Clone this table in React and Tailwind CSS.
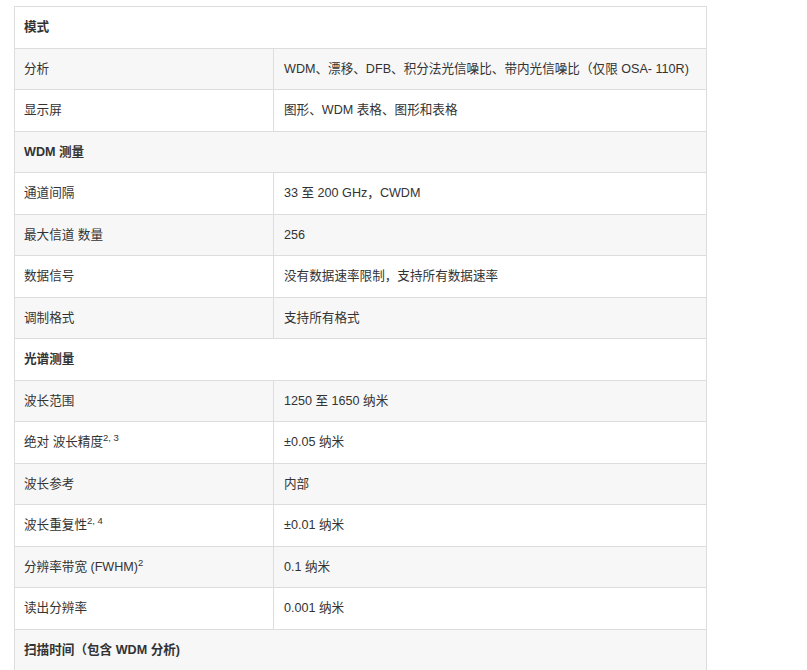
const rows = [
  { head: "模式" },
  { label: "分析", value: "WDM、漂移、DFB、积分法光信噪比、带内光信噪比（仅限 OSA- 110R)" },
  { label: "显示屏", value: "图形、WDM 表格、图形和表格" },
  { head: "WDM 测量" },
  { label: "通道间隔", value: "33 至 200 GHz，CWDM" },
  { label: "最大信道 数量", value: "256" },
  { label: "数据信号", value: "没有数据速率限制，支持所有数据速率" },
  { label: "调制格式", value: "支持所有格式" },
  { head: "光谱测量" },
  { label: "波长范围", value: "1250 至 1650 纳米" },
  { label: "绝对 波长精度", sup: "2, 3", value: "±0.05 纳米" },
  { label: "波长参考", value: "内部" },
  { label: "波长重复性", sup: "2, 4", value: "±0.01 纳米" },
  { label: "分辨率带宽 (FWHM)", sup: "2", value: "0.1 纳米" },
  { label: "读出分辨率", value: "0.001 纳米" },
  { head: "扫描时间（包含 WDM 分析)" },
];

export default function App() {
  return (
    <div
      className="min-h-[670px] bg-white pl-[14px] pt-[6px] text-[12.6px] text-[#333]"
      style={{ fontFamily: '"Liberation Sans", Arial, "Noto Sans CJK SC", sans-serif' }}
    >
      <table className="w-[693px] table-fixed border-collapse">
        <colgroup>
          <col className="w-[259px]" />
          <col />
        </colgroup>
        <tbody>
          {rows.map((row, i) => (
            <tr key={i} className={i % 2 === 1 ? "bg-[#f7f7f7]" : "bg-white"}>
              {row.head ? (
                <td colSpan={2} className="border border-[#dddddd] px-[9px] py-[10px] font-bold leading-[20.5px]">
                  {row.head}
                </td>
              ) : (
                <>
                  <td className="border border-[#dddddd] px-[9px] py-[10px] leading-[20.5px]">
                    {row.label}
                    {row.sup ? (
                      <span className="relative -top-[5px] text-[9.5px] leading-none">{row.sup}</span>
                    ) : null}
                  </td>
                  <td className="whitespace-nowrap border border-[#dddddd] px-[10px] py-[10px] leading-[20.5px]">
                    {row.value}
                  </td>
                </>
              )}
            </tr>
          ))}
        </tbody>
      </table>
    </div>
  );
}
